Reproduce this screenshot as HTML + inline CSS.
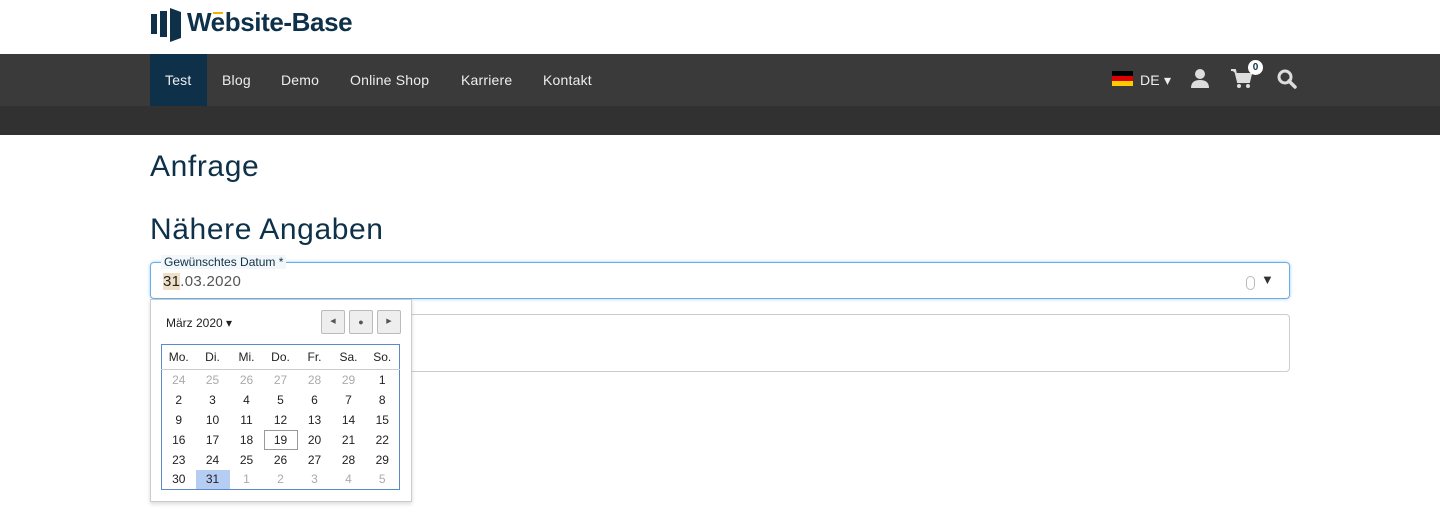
<!DOCTYPE html>
<html><head><meta charset="utf-8"><style>
*{box-sizing:border-box;margin:0;padding:0}
body{width:1440px;height:521px;background:#fff;font-family:"Liberation Sans",sans-serif;position:relative;overflow:hidden}
.nav{position:absolute;top:54px;left:0;width:1440px;height:52px;background:#3a3a3a}
.band{position:absolute;top:106px;left:0;width:1440px;height:29px;background:#313131}
.nav a{position:absolute;top:0;height:52px;line-height:52px;color:#eee;font-size:14px;text-decoration:none;letter-spacing:0.2px}
h1{position:absolute;left:150px;font-weight:normal;color:#0e3149;font-size:30px;letter-spacing:0.6px}
.abs{position:absolute}
table{border-collapse:collapse;font-size:12px}
td,th{width:34px;height:20px;text-align:center;color:#222}
th{font-weight:normal;height:25px;border-bottom:1px solid #ccc}
td.g{color:#aaa}
</style></head><body>
<svg class="abs" style="left:151px;top:8px" width="32" height="34" viewBox="0 0 32 34"><rect x="0" y="6" width="6" height="20" fill="#0e3149"/><rect x="9" y="3" width="7" height="26" fill="#0e3149"/><polygon points="19,0 30,4 30,30 19,34" fill="#0e3149"/></svg>
<div class="abs" style="left:187px;top:7px;font-size:26px;font-weight:bold;color:#0e3149;letter-spacing:-0.4px">Website-Base</div>
<div class="abs" style="left:213px;top:12px;width:10px;height:2px;background:#f0b400"></div>
<div class="nav">
<div class="abs" style="left:150px;top:0;width:57px;height:52px;background:#0e3149"></div>
<a style="left:165px">Test</a><a style="left:222px">Blog</a><a style="left:281px">Demo</a><a style="left:350px">Online Shop</a><a style="left:461px">Karriere</a><a style="left:543px">Kontakt</a>
<div class="abs" style="left:1112px;top:17px;width:21px;height:15px;background:linear-gradient(#000 33%,#d00 33%,#d00 66%,#fc0 66%)"></div>
<a style="left:1140px">DE ▾</a>
<svg class="abs" style="left:1191px;top:15px" width="18" height="20" viewBox="0 0 18 20"><circle cx="9" cy="5" r="5" fill="#ddd"/><path d="M0 19 Q0 11 9 11 Q18 11 18 19Z" fill="#ddd"/></svg>
<svg class="abs" style="left:1231px;top:15px" width="22" height="20" viewBox="0 0 22 20"><path d="M0 1H4L7 13H18L20 5H6" fill="#ddd" stroke="#ddd" stroke-width="2"/><circle cx="8" cy="17" r="2" fill="#ddd"/><circle cx="17" cy="17" r="2" fill="#ddd"/></svg>
<div class="abs" style="left:1248px;top:6px;width:15px;height:15px;border-radius:50%;background:#fff;color:#0e3149;font-size:10px;font-weight:bold;text-align:center;line-height:15px">0</div>
<svg class="abs" style="left:1277px;top:15px" width="20" height="20" viewBox="0 0 20 20"><circle cx="8" cy="8" r="6" fill="none" stroke="#ddd" stroke-width="3"/><path d="M12 12L18 18" stroke="#ddd" stroke-width="3.5" stroke-linecap="round"/></svg>
</div>
<div class="band"></div>
<h1 style="top:150px">Anfrage</h1>
<h1 style="top:213px">Nähere Angaben</h1>
<div class="abs" style="left:150px;top:262px;width:1140px;height:37px;border:1px solid #6aaee6;border-radius:4px;box-shadow:0 0 3px #9cc8ee"></div>
<div class="abs" style="left:161px;top:255px;background:#f3f7f9;padding:0 3px;font-size:12px;color:#0e3149">Gewünschtes Datum *</div>
<div class="abs" style="left:163px;top:273px;font-size:15px;color:#555;letter-spacing:0.3px"><span style="background:#f0dfc7;color:#222">31</span>.03.2020</div>
<div class="abs" style="left:1246px;top:276px;width:9px;height:14px;border:1px solid #bbb;border-radius:5px"></div>
<div class="abs" style="left:1261px;top:272px;font-size:13px;color:#333">▼</div>
<div class="abs" style="left:150px;top:314px;width:1140px;height:58px;border:1px solid #ccc;border-radius:4px"></div>
<div class="abs" style="left:150px;top:299px;width:262px;height:203px;background:#fff;border:1px solid #ccc;box-shadow:0 2px 4px rgba(0,0,0,.15)">
<div class="abs" style="left:15px;top:16px;font-size:12px;color:#222">März 2020 ▾</div>
<div class="abs" style="left:170px;top:10px;width:24px;height:24px;border:1px solid #bbb;border-radius:2px;background:#eee;font-size:7px;text-align:center;line-height:22px;color:#555">◀</div>
<div class="abs" style="left:198px;top:10px;width:24px;height:24px;border:1px solid #bbb;border-radius:2px;background:#eee;font-size:9px;text-align:center;line-height:22px;color:#555">●</div>
<div class="abs" style="left:226px;top:10px;width:24px;height:24px;border:1px solid #bbb;border-radius:2px;background:#eee;font-size:7px;text-align:center;line-height:22px;color:#555">▶</div>
<table class="abs" style="left:10px;top:44px;border:1px solid #5a8ac8">
<tr><th>Mo.</th><th>Di.</th><th>Mi.</th><th>Do.</th><th>Fr.</th><th>Sa.</th><th>So.</th></tr>
<tr><td class="g">24</td><td class="g">25</td><td class="g">26</td><td class="g">27</td><td class="g">28</td><td class="g">29</td><td>1</td></tr>
<tr><td>2</td><td>3</td><td>4</td><td>5</td><td>6</td><td>7</td><td>8</td></tr>
<tr><td>9</td><td>10</td><td>11</td><td>12</td><td>13</td><td>14</td><td>15</td></tr>
<tr><td>16</td><td>17</td><td>18</td><td style="outline:1px solid #999;outline-offset:-1px">19</td><td>20</td><td>21</td><td>22</td></tr>
<tr><td>23</td><td>24</td><td>25</td><td>26</td><td>27</td><td>28</td><td>29</td></tr>
<tr><td>30</td><td style="background:#b5cdf3">31</td><td class="g">1</td><td class="g">2</td><td class="g">3</td><td class="g">4</td><td class="g">5</td></tr>
</table>
</div>
</body></html>
